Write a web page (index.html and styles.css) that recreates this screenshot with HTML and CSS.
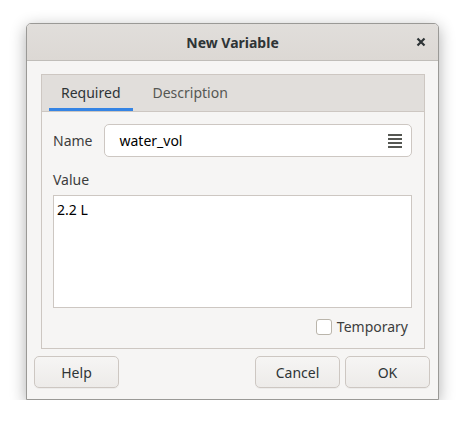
FILE: index.html
```html
<!DOCTYPE html>
<html>
<head>
<meta charset="utf-8">
<link rel="stylesheet" href="styles.css">
</head>
<body>
<div class="window">
  <div class="titlebar">
    <span class="title">New Variable</span>
    <span class="close">
      <svg width="10" height="10" viewBox="0 0 10 10"><path d="M1.5 1.5 L8.5 8.5 M8.5 1.5 L1.5 8.5" stroke="#2e3436" stroke-width="2.2" stroke-linecap="butt"/></svg>
    </span>
  </div>
  <div class="content">
    <div class="notebook">
      <div class="tabs">
        <div class="tab active">Required</div>
        <div class="tab">Description</div>
      </div>
      <div class="panel">
        <div class="row-name">
          <span class="label">Name</span>
          <div class="entry">
            <span class="entry-text">water_vol</span>
            <svg class="menu-icon" width="14" height="14" viewBox="0 0 14 14"><rect x="0" y="0" width="14" height="2" fill="#555753"/><rect x="0" y="4" width="14" height="2" fill="#555753"/><rect x="0" y="8" width="14" height="2" fill="#555753"/><rect x="0" y="12" width="14" height="2" fill="#555753"/></svg>
          </div>
        </div>
        <div class="label value-label">Value</div>
        <div class="textview">2.2 L</div>
        <div class="check-row">
          <span class="checkbox"></span>
          <span class="label">Temporary</span>
        </div>
      </div>
    </div>
  </div>
  <div class="buttons">
    <div class="btn">Help</div>
    <div class="spacer"></div>
    <div class="btn">Cancel</div>
    <div class="btn">OK</div>
  </div>
</div>
</body>
</html>
```
FILE: styles.css
```css
html, body {
  margin: 0;
  padding: 0;
  background: #ffffff;
}
body {
  font-family: "Noto Sans", "Open Sans", sans-serif;
  font-size: 14px;
  color: #2e3436;
}
.window {
  margin: 23px 0 0 26px;
  width: 413px;
  height: 377px;
  box-sizing: border-box;
  border: 1px solid #9a9996;
  border-radius: 5px 5px 0 0;
  background: #f6f5f4;
  box-shadow: 0 4px 16px rgba(0,0,0,0.32);
  display: flex;
  flex-direction: column;
  overflow: hidden;
}
.titlebar {
  height: 36px;
  flex: none;
  background: linear-gradient(#e1dedb, #dcd8d4);
  border-bottom: 1px solid #c0bdb9;
  display: flex;
  align-items: center;
  justify-content: center;
  position: relative;
}
.title {
  font-weight: bold;
  font-size: 14px;
  color: #2e3436;
}
.close {
  position: absolute;
  right: 12px;
  top: 13px;
  width: 10px;
  height: 10px;
  display: flex;
}
.content {
  padding: 13px 13px 0 14px;
}
.notebook {
  border: 1px solid #cdc7c2;
  background: #f6f5f4;
}
.tabs {
  height: 36px;
  background: #e1dedb;
  border-bottom: 1px solid #cdc7c2;
  display: flex;
  padding-left: 7px;
  gap: 8px;
}
.tab {
  padding: 0 12px;
  display: flex;
  align-items: center;
  color: #555753;
  font-size: 14px;
  border-bottom: 3px solid transparent;
  padding-top: 2px;
}
.tab.active {
  color: #2e3436;
  border-bottom-color: #3584e4;
}
.panel {
  padding: 12px 12px 12px 11px;
  display: flex;
  flex-direction: column;
}
.row-name {
  display: flex;
  align-items: center;
  gap: 12px;
}
.label {
  color: #3d3d3d;
}
.entry {
  flex: 1;
  height: 33px;
  box-sizing: border-box;
  border: 1px solid #cdc7c2;
  border-radius: 5px;
  background: #ffffff;
  display: flex;
  align-items: center;
  padding: 0 9px 0 14px;
}
.entry-text {
  flex: 1;
  color: #000000;
}
.menu-icon {
  display: block;
}
.value-label {
  margin-top: 13px;
  height: 20px;
  line-height: 20px;
}
.textview {
  margin-top: 5px;
  height: 113px;
  box-sizing: border-box;
  border: 1px solid #cdc7c2;
  background: #ffffff;
  padding: 4px 3px;
  color: #000000;
}
.check-row {
  margin-top: 9px;
  display: flex;
  justify-content: flex-end;
  align-items: center;
  gap: 5px;
  padding-right: 4px;
}
.checkbox {
  width: 14px;
  height: 14px;
  border: 1px solid #bab5ab;
  border-radius: 3px;
  background: #ffffff;
}
.buttons {
  display: flex;
  padding: 7px 8px 0 7px;
  gap: 5px;
}
.spacer {
  flex: 1;
}
.btn {
  width: 85px;
  height: 32px;
  box-sizing: border-box;
  border: 1px solid #cdc7c2;
  border-radius: 5px;
  background: linear-gradient(#f6f5f4, #edebe9);
  display: flex;
  align-items: center;
  justify-content: center;
  color: #2e3436;
  box-shadow: 0 1px 0 rgba(0,0,0,0.04);
}
```
